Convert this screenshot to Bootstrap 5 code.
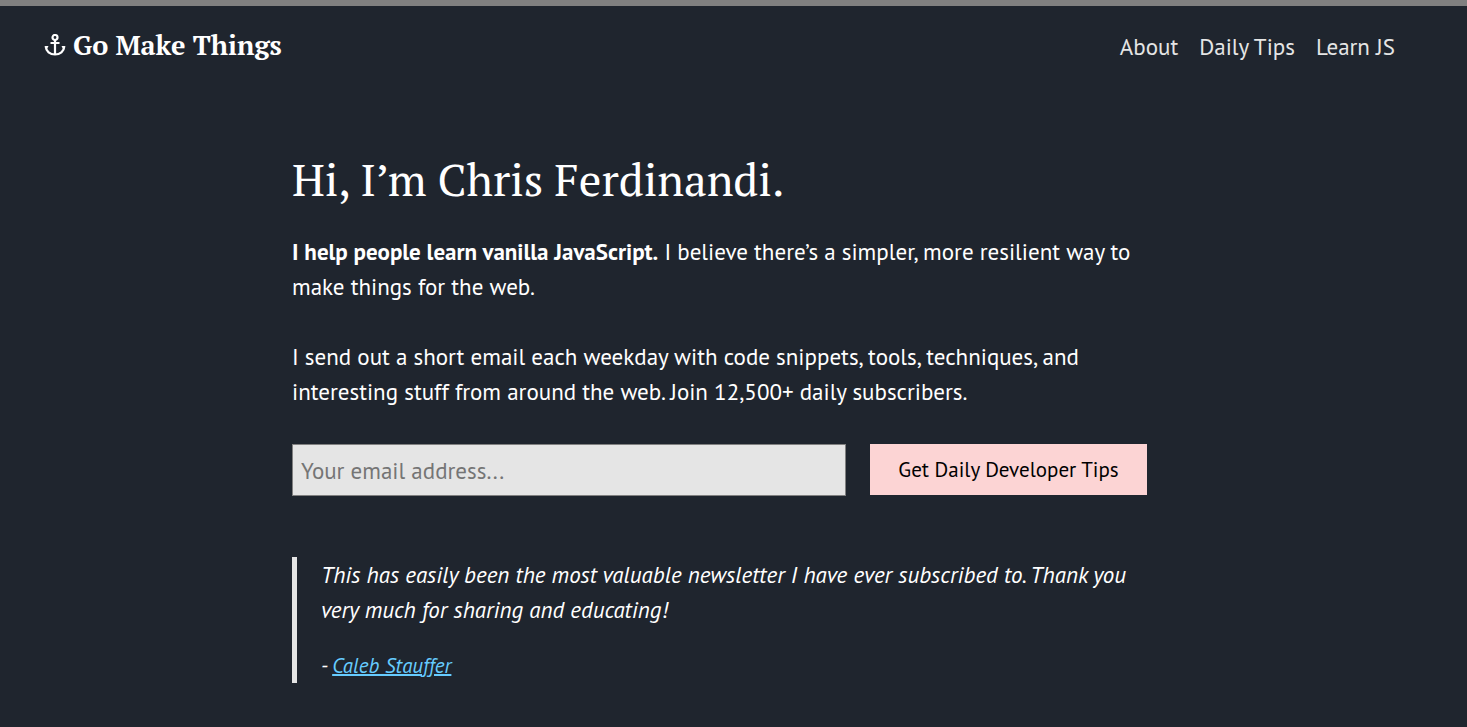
<!DOCTYPE html>
<html lang="en">
<head>
<meta charset="utf-8">
<meta name="viewport" content="width=device-width, initial-scale=1">
<title>Go Make Things</title>
<link href="https://cdn.jsdelivr.net/npm/bootstrap@5.3.0/dist/css/bootstrap.min.css" rel="stylesheet">
<style>
  body {
    background: #1f252e;
    color: #fff;
    border-top: 6px solid #808080;
    font-family: "PT Sans", "Noto Sans", sans-serif;
    font-size: 23px;
    line-height: 35px;
    padding-left: 44px;
    padding-right: 72px;
  }
  .site-nav { padding: 22px 0 0; }
  .brand { font: bold 27px/35px "PT Serif", "Liberation Serif", serif; gap: 7px; }
  .site-nav .nav-link { color: #e5e5e5; padding: 0; }
  .menu { gap: 21px; padding-top: 1px; }
  .intro { max-width: 855px; padding-top: 85px; }
  h1 { font: 400 45px/60px "PT Serif", "Liberation Serif", serif; margin: 0 0 25px; }
  .intro p { margin-bottom: 35px; }
  .signup { gap: 24px; margin: 35px 0 61px; }
  .intro .pitch { margin-bottom: 0; }
  .signup .form-control {
    background: #e5e5e5; border: 1px solid #808080; border-radius: 0;
    height: 52px; padding: 0 8px; font-size: 23px; color: #272727;
  }
  .signup .form-control::placeholder { color: #757575; }
  .signup .btn {
    background: #fcd4d4; color: #000; border: 0; border-radius: 0;
    width: 277px; height: 51px; padding: 0; font-size: 21px; flex: none;
  }
  .praise { border-left: 5px solid #e5e5e5; padding-left: 24px; font-style: italic; margin: 0; font-size: 23px; }
  .intro .praise p { margin-bottom: 21px; }
  .praise cite { display: block; font-size: 21px; }
  .praise a { color: #6cf; text-decoration-thickness: 2px; }
</style>
</head>
<body>
<nav class="site-nav d-flex flex-wrap justify-content-between align-items-start">
  <a class="brand d-flex align-items-center text-white text-decoration-none" href="#">
    <svg width="22" height="24" viewBox="0 0 22 24" fill="none" stroke="currentColor" stroke-width="2.2" aria-hidden="true">
      <circle cx="11" cy="3.500" r="2.500"/>
      <path d="M11 6v15M6.500 9h9"/>
      <path d="M1.700 12.500c.3 5 4.300 8 9.300 8s9-3 9.300-8"/>
      <path d="M.5 12h4l-1.500 3zM21.500 12h-4l1.500 3z" fill="currentColor" stroke="none"/>
    </svg>
    <span>Go Make Things</span>
  </a>
  <ul class="menu nav">
    <li><a class="nav-link" href="#">About</a></li>
    <li><a class="nav-link" href="#">Daily Tips</a></li>
    <li><a class="nav-link" href="#">Learn JS</a></li>
  </ul>
</nav>
<main class="intro mx-auto">
  <h1>Hi, I’m Chris Ferdinandi.</h1>
  <p><strong>I help people learn vanilla JavaScript.</strong> I believe there’s a simpler, more resilient way to make things for the web.</p>
  <p class="pitch">I send out a short email each weekday with code snippets, tools, techniques, and interesting stuff from around the web. Join 12,500+ daily subscribers.</p>
  <form class="signup d-flex align-items-start">
    <input class="form-control" type="email" aria-label="Email address" placeholder="Your email address...">
    <button class="btn" type="submit">Get Daily Developer Tips</button>
  </form>
  <blockquote class="praise">
    <p>This has easily been the most valuable newsletter I have ever subscribed to. Thank you very much for sharing and educating!</p>
    <cite>- <a href="#">Caleb Stauffer</a></cite>
  </blockquote>
</main>
<script src="https://cdn.jsdelivr.net/npm/bootstrap@5.3.0/dist/js/bootstrap.bundle.min.js"></script>
</body>
</html>
